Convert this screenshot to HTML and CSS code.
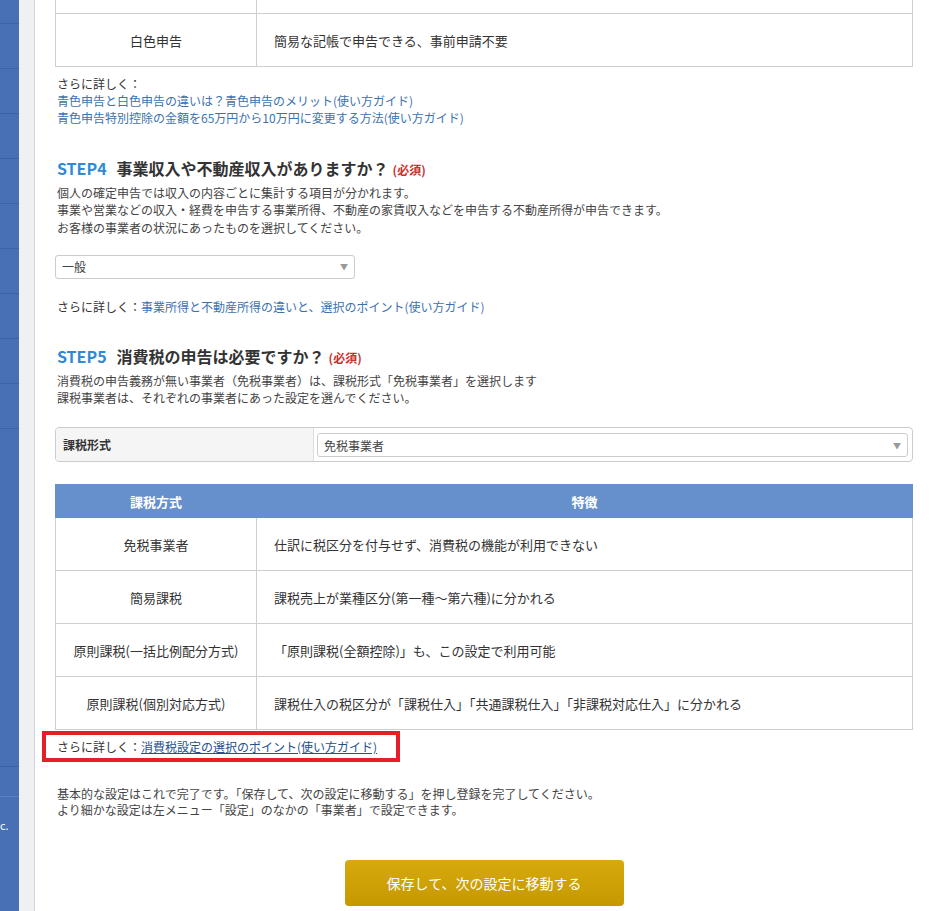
FILE: index.html
```html
<!DOCTYPE html>
<html lang="ja">
<head>
    <meta charset="UTF-8">
    <meta name="viewport" content="width=device-width, initial-scale=1.0">
    <title>事業者の基本設定</title>
    <link rel="stylesheet" href="styles.css">
</head>
<body>
    <div class="sideMenu">
        <ul class="menuList">
            <li></li>
            <li></li>
            <li></li>
            <li></li>
            <li></li>
            <li></li>
            <li></li>
            <li></li>
            <li></li>
            <li></li>
        </ul>
        <div class="menuSub"></div>
        <div class="menuFooter">c.</div>
    </div>
    <div class="gutter"></div>

    <div class="main">
        <table class="infoTable topTable">
            <tr class="cutRow">
                <td class="typeCell"></td>
                <td></td>
            </tr>
            <tr>
                <td class="typeCell">白色申告</td>
                <td>簡易な記帳で申告できる、事前申請不要</td>
            </tr>
        </table>

        <p class="more">
            さらに詳しく：<br>
            <a href="#">青色申告と白色申告の違いは？青色申告のメリット(使い方ガイド)</a><br>
            <a href="#">青色申告特別控除の金額を65万円から10万円に変更する方法(使い方ガイド)</a>
        </p>

        <h2 class="stepTitle"><span class="stepNum">STEP4</span>事業収入や不動産収入がありますか？<span class="required">(必須)</span></h2>
        <p class="stepText">
            個人の確定申告では収入の内容ごとに集計する項目が分かれます。<br>
            事業や営業などの収入・経費を申告する事業所得、不動産の家賃収入などを申告する不動産所得が申告できます。<br>
            お客様の事業者の状況にあったものを選択してください。
        </p>
        <div class="selectBox shortSelect">
            <span>一般</span>
            <span class="arrow">▼</span>
        </div>
        <p class="more moreInline">さらに詳しく：<a href="#">事業所得と不動産所得の違いと、選択のポイント(使い方ガイド)</a></p>

        <h2 class="stepTitle stepFive"><span class="stepNum">STEP5</span>消費税の申告は必要ですか？<span class="required">(必須)</span></h2>
        <p class="stepText">
            消費税の申告義務が無い事業者（免税事業者）は、課税形式「免税事業者」を選択します<br>
            課税事業者は、それぞれの事業者にあった設定を選んでください。
        </p>
        <div class="formPanel">
            <div class="formLabel">課税形式</div>
            <div class="formField">
                <div class="selectBox">
                    <span>免税事業者</span>
                    <span class="arrow">▼</span>
                </div>
            </div>
        </div>

        <table class="infoTable taxTable">
            <tr>
                <th class="typeCell">課税方式</th>
                <th>特徴</th>
            </tr>
            <tr>
                <td class="typeCell">免税事業者</td>
                <td>仕訳に税区分を付与せず、消費税の機能が利用できない</td>
            </tr>
            <tr>
                <td class="typeCell">簡易課税</td>
                <td>課税売上が業種区分(第一種～第六種)に分かれる</td>
            </tr>
            <tr>
                <td class="typeCell">原則課税(一括比例配分方式)</td>
                <td>「原則課税(全額控除)」も、この設定で利用可能</td>
            </tr>
            <tr>
                <td class="typeCell">原則課税(個別対応方式)</td>
                <td>課税仕入の税区分が「課税仕入」「共通課税仕入」「非課税対応仕入」に分かれる</td>
            </tr>
        </table>

        <div class="highlightWrap">
            <p class="more highlight">さらに詳しく：<a href="#" class="darkLink">消費税設定の選択のポイント(使い方ガイド)</a></p>
        </div>

        <p class="finishText">
            基本的な設定はこれで完了です。「保存して、次の設定に移動する」を押し登録を完了してください。<br>
            より細かな設定は左メニュー「設定」のなかの「事業者」で設定できます。
        </p>

        <button class="saveBtn">保存して、次の設定に移動する</button>
    </div>
</body>
</html>
```

FILE: styles.css
```css
body {
    margin: 0;
    padding: 0;
    display: flex;
    height: 100vh;
    overflow: hidden;
    font-family: "Noto Sans CJK JP", "Noto Sans", sans-serif;
    font-size: 12px;
    color: #333;
    background-color: #fff;
}

.sideMenu {
    width: 19px;
    flex: 0 0 19px;
    background-color: #4871b5;
    overflow: hidden;
}

.menuList {
    list-style: none;
    margin: -21px 0 0 0;
    padding: 0;
}

.menuList li {
    height: 44px;
    border-bottom: 1px solid #3d63a2;
}

.menuSub {
    margin-top: 337px;
    height: 29px;
    border-top: 1px solid #3d63a2;
    border-bottom: 1px solid #5a80bd;
}

.menuFooter {
    color: #fff;
    font-size: 11px;
    line-height: 14px;
    margin-top: 21px;
}

.gutter {
    width: 15px;
    flex: 0 0 15px;
    background-color: #eef0f4;
    border-right: 1px solid #d2d6dc;
}

.main {
    flex: 1;
    padding: 0 20px;
}

.infoTable {
    width: 100%;
    border-collapse: collapse;
    font-size: 13px;
}

.infoTable td,
.infoTable th {
    border: 1px solid #cfcfcf;
    height: 52px;
    padding: 0 17px;
    text-align: left;
}

.infoTable .typeCell {
    width: 166px;
    text-align: center;
}

.topTable .cutRow td {
    height: 13px;
    padding: 0;
    border-top: none;
}

.taxTable {
    margin-top: 22px;
}

.taxTable th {
    height: 32px;
    background-color: #6690cb;
    border-color: #6690cb;
    color: #fff;
    font-weight: bold;
    text-align: center;
}

.more {
    margin: 8px 0 0 2px;
    line-height: 17px;
}

.more a {
    color: #3c72b0;
    text-decoration: none;
}

.moreInline {
    margin-top: 19px;
}

.stepTitle {
    margin: 30px 0 0 2px;
    font-size: 16px;
    line-height: 24px;
    font-weight: bold;
    color: #333;
}

.stepFive {
    margin-top: 29px;
}

.stepNum {
    color: #3189d2;
    margin-right: 10px;
}

.required {
    color: #c9302c;
    font-size: 12px;
    margin-left: 4px;
}

.stepText {
    margin: 2px 0 0 2px;
    line-height: 17.3px;
    color: #444;
}

.selectBox {
    display: flex;
    justify-content: space-between;
    align-items: center;
    height: 22px;
    padding: 0 6px;
    border: 1px solid #cccccc;
    border-radius: 3px;
    background-color: #fff;
    color: #444;
}

.shortSelect {
    width: 286px;
    margin-top: 19px;
}

.arrow {
    font-size: 8px;
    color: #999;
}

.formPanel {
    display: flex;
    margin-top: 21px;
    border: 1px solid #cccccc;
    border-radius: 4px;
    overflow: hidden;
}

.formLabel {
    width: 243px;
    padding: 0 7px;
    background-color: #f5f5f5;
    border-right: 1px solid #dddddd;
    font-weight: bold;
    line-height: 33px;
}

.formField {
    flex: 1;
    padding: 5px 4px 4px 3px;
}

.highlightWrap {
    margin: 1px 0 0 -13px;
}

.highlight {
    display: inline-block;
    margin: 0;
    padding: 3px 19px 3px 11px;
    border: 4px solid #e3202a;
}

.highlight .darkLink {
    color: #24508c;
    text-decoration: underline;
}

.finishText {
    margin: 24px 0 0 2px;
    line-height: 16px;
    color: #444;
}

.saveBtn {
    display: block;
    width: 279px;
    height: 46px;
    margin: 42px auto 0;
    border: none;
    border-radius: 4px;
    background: linear-gradient(#d6aa0d, #c69800);
    color: #fff;
    font-family: inherit;
    font-size: 14px;
    cursor: pointer;
}
```
